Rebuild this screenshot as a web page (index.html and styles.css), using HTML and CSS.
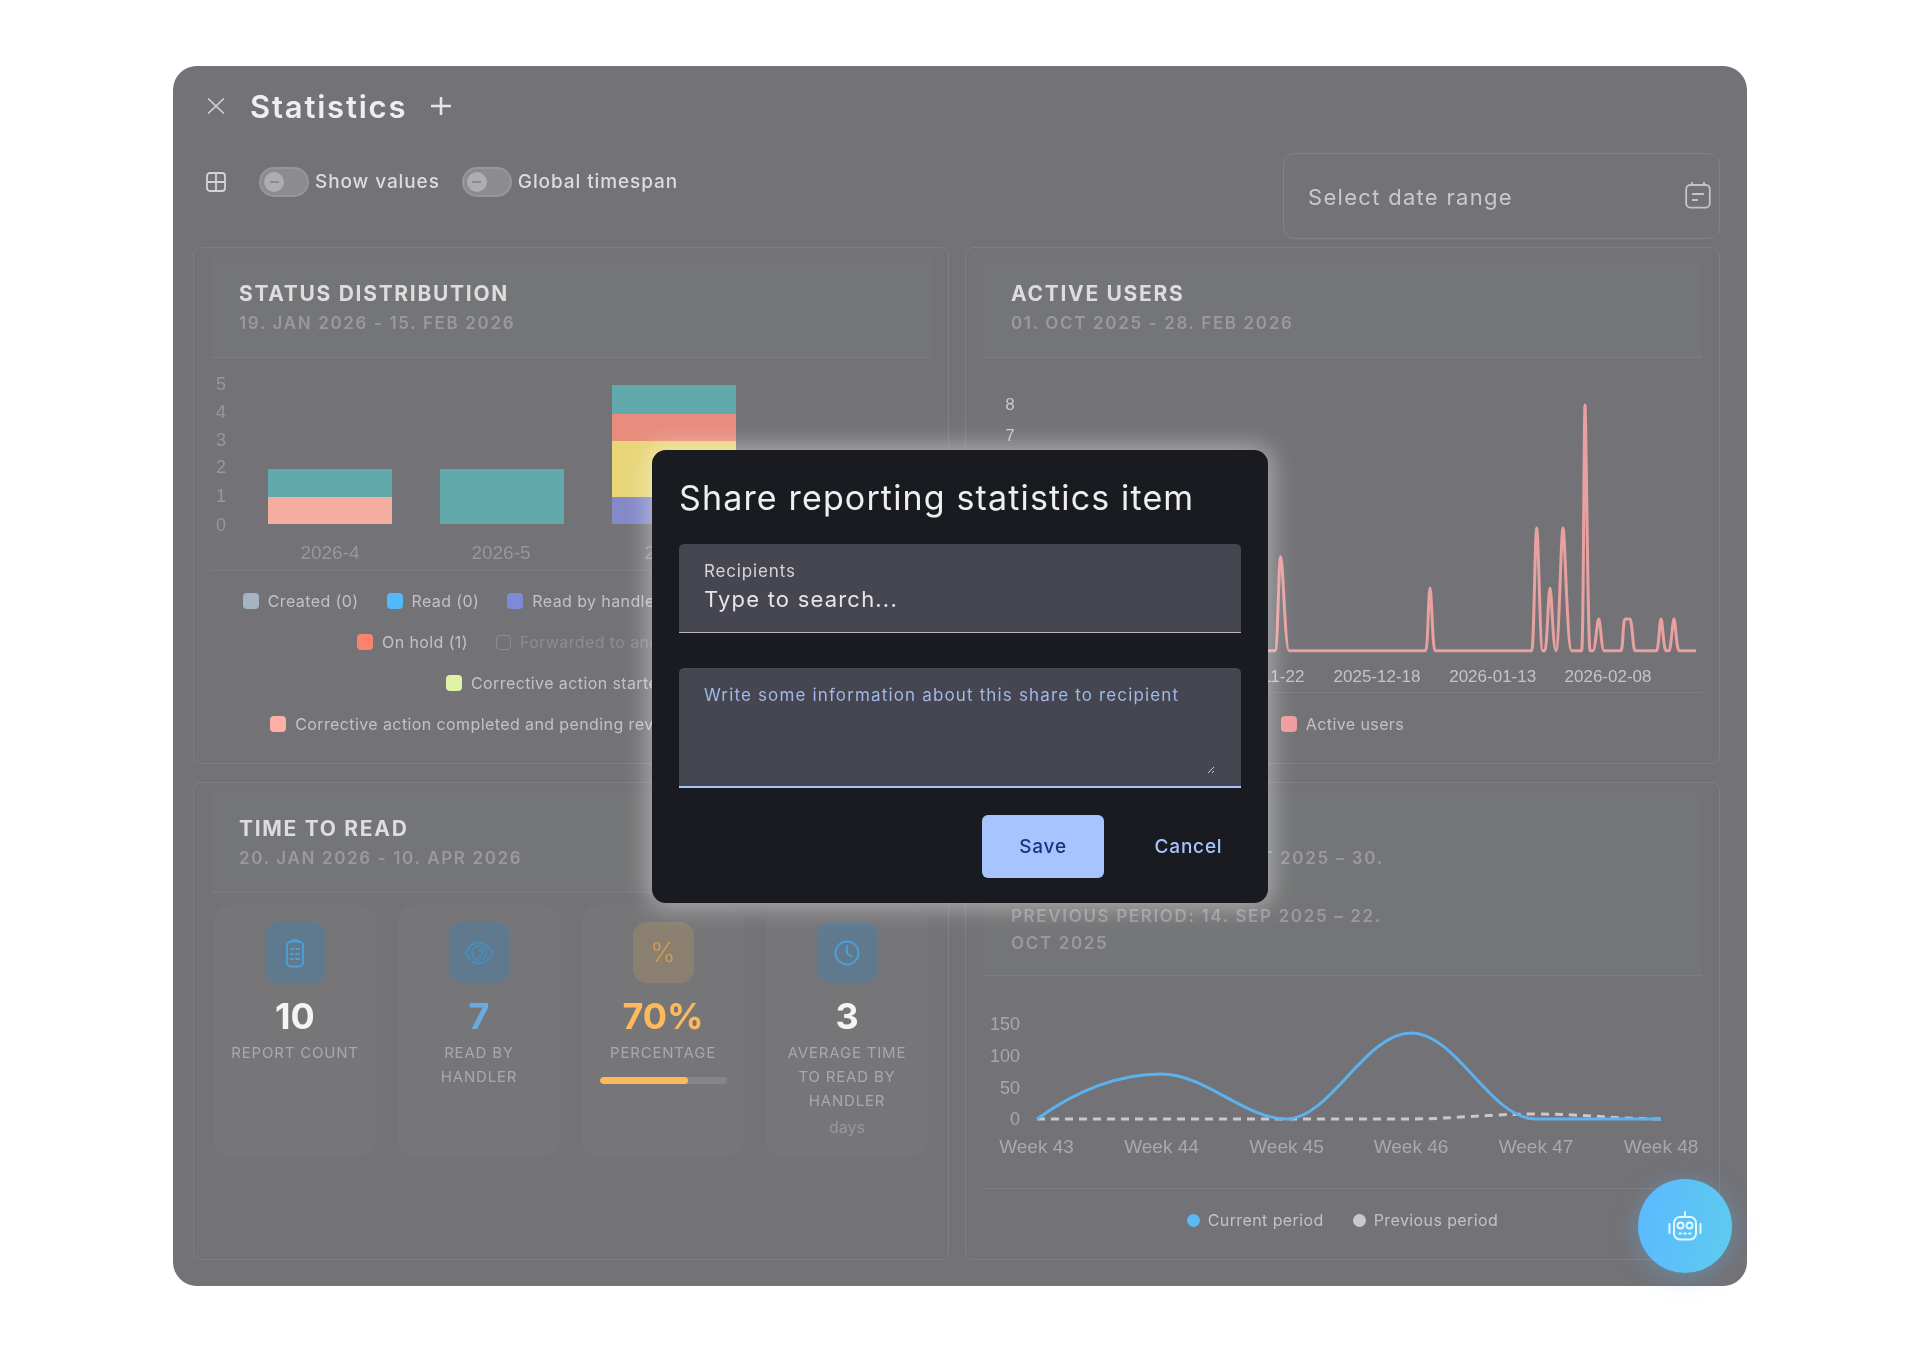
FILE: index.html
```html
<!DOCTYPE html>
<html lang="en">
<head>
<meta charset="utf-8">
<title>Statistics</title>
<link rel="stylesheet" href="styles.css">
</head>
<body>
<main class="panel">
  <header class="panel-head">
    <svg class="icon-close" viewBox="0 0 18 16" width="18" height="16"><path d="M1 0.5 17 15.5M17 0.5 1 15.5"/></svg>
    <h1 class="panel-title">Statistics</h1>
    <svg class="icon-plus" viewBox="0 0 20 18" width="20" height="18"><path d="M10 0v18M0 9h20"/></svg>
  </header>

  <div class="toolbar">
    <div class="toolbar-left">
      <svg class="icon-grid" viewBox="0 0 20 20" width="20" height="20"><rect x="1" y="1" width="18" height="18" rx="3"/><path d="M10 1v18M1 10h18"/></svg>
      <span class="toggle"><span class="knob"></span></span>
      <span class="toggle-text">Show values</span>
      <span class="toggle toggle-second"><span class="knob"></span></span>
      <span class="toggle-text">Global timespan</span>
    </div>
    <div class="date-field">
      <span class="date-text">Select date range</span>
      <svg class="icon-cal" viewBox="0 0 26 28" width="26" height="28"><rect x="1.2" y="4" width="23.6" height="22.6" rx="4"/><path d="M7 4V1M19 4V1M7 13h12M7 19h6"/></svg>
    </div>
  </div>

  <div class="cards">
    <section class="card">
      <div class="card-head">
        <h2 class="card-title">STATUS DISTRIBUTION</h2>
        <p class="card-sub">19. JAN 2026 - 15. FEB 2026</p>
      </div>
      <svg class="chart chart-status" viewBox="194 358 754 212">
        <g class="tick">
          <text x="221" y="390">5</text><text x="221" y="418">4</text><text x="221" y="446">3</text>
          <text x="221" y="473">2</text><text x="221" y="502">1</text><text x="221" y="531">0</text>
        </g>
        <rect class="s-teal" x="268" y="469" width="124" height="28"/>
        <rect class="s-peach" x="268" y="497" width="124" height="27"/>
        <rect class="s-teal" x="440" y="469" width="124" height="55"/>
        <rect class="s-teal" x="612" y="385" width="124" height="29"/>
        <rect class="s-salmon" x="612" y="414" width="124" height="27"/>
        <rect class="s-yellow" x="612" y="441" width="124" height="56"/>
        <rect class="s-violet" x="612" y="497" width="124" height="27"/>
        <g class="xlabel">
          <text x="330" y="559">2026-4</text><text x="501" y="559">2026-5</text><text x="674" y="559">2026-6</text>
        </g>
      </svg>
      <div class="rule"></div>
      <div class="legend legend-status">
        <div class="legend-row">
          <span class="item"><i class="sw sw-created"></i>Created (0)</span>
          <span class="item"><i class="sw sw-read"></i>Read (0)</span>
          <span class="item"><i class="sw sw-handler"></i>Read by handler (1)</span>
          <span class="item"><i class="sw sw-progress"></i>Being processed (0)</span>
        </div>
        <div class="legend-row">
          <span class="item"><i class="sw sw-hold"></i>On hold (1)</span>
          <span class="item item-off"><i class="sw sw-off"></i>Forwarded to another division (0)</span>
        </div>
        <div class="legend-row">
          <span class="item"><i class="sw sw-started"></i>Corrective action started (2)</span>
        </div>
        <div class="legend-row">
          <span class="item"><i class="sw sw-done"></i>Corrective action completed and pending review by a safety manager (1)</span>
        </div>
      </div>
    </section>

    <section class="card">
      <div class="card-head">
        <h2 class="card-title">ACTIVE USERS</h2>
        <p class="card-sub">01. OCT 2025 - 28. FEB 2026</p>
      </div>
      <svg class="chart chart-active" viewBox="966 358 753 334">
        <g class="tick">
          <text x="1010" y="410">8</text><text x="1010" y="441">7</text>
        </g>
        <path class="line-active" d="M1266 650.7H1275C1278 650.7 1278.5 556.7 1280.7 556.7C1283 556.7 1285 650.7 1289 650.7H1425.7C1428 650.7 1428.4 588 1430 588C1431.6 588 1432.5 650.7 1435 650.7H1531.7C1534 650.7 1535 528 1536.7 528C1538.4 528 1540 650.7 1542.7 650.7H1545C1547 650.7 1548.4 588 1550 588C1551.6 588 1553 650.7 1556 650.7C1559 650.7 1561 528 1563 528C1565 528 1567 650.7 1571.7 650.7H1581.7C1583.4 650.7 1584 405 1585 405C1586 405 1588 650.7 1590 650.7H1593C1595.5 650.7 1597 619 1598.7 619C1600.4 619 1601.5 650.7 1604 650.7H1621C1623 650.7 1623 619 1625 619H1630C1632 619 1633 650.7 1635 650.7H1656.7C1658.6 650.7 1659.6 619 1661 619C1662.4 619 1663.6 650.7 1666 650.7H1669C1671 650.7 1672.6 619 1674 619C1675.4 619 1676.6 650.7 1679 650.7H1696"/>
        <g class="xlabel">
          <text x="1261.5" y="682">2025-11-22</text><text x="1377" y="682">2025-12-18</text>
          <text x="1492.7" y="682">2026-01-13</text><text x="1608" y="682">2026-02-08</text>
        </g>
      </svg>
      <div class="rule"></div>
      <div class="legend legend-active">
        <div class="legend-row">
          <span class="item"><i class="sw sw-active"></i>Active users</span>
        </div>
      </div>
    </section>

    <section class="card">
      <div class="card-head">
        <h2 class="card-title">TIME TO READ</h2>
        <p class="card-sub">20. JAN 2026 - 10. APR 2026</p>
      </div>
      <div class="tiles">
        <article class="tile">
          <div class="tile-icon">
            <svg class="ico-blue" viewBox="0 0 24 30" width="24" height="30"><rect x="4" y="3.5" width="16" height="25" rx="4"/><path d="M8.5 3.5C8.5 1.5 15.5 1.5 15.5 3.5M8 11h2M13 11h3M8 16h2M13 16h3M8 21h2M13 21h3"/></svg>
          </div>
          <div class="tile-num">10</div>
          <div class="tile-label">REPORT COUNT</div>
        </article>
        <article class="tile">
          <div class="tile-icon">
            <svg class="ico-blue ico-eye" viewBox="0 0 30 26" width="30" height="26"><path d="M1.5 13C6 5 10 2.5 15 2.5S24 5 28.500 13C24 21 20 23.500 15 23.500S6 21 1.500 13Z"/><circle cx="15" cy="13" r="7"/><path d="M15 9.500A3.500 3.500 0 0 1 15 16.500"/></svg>
          </div>
          <div class="tile-num num-blue">7</div>
          <div class="tile-label">READ BY HANDLER</div>
        </article>
        <article class="tile">
          <div class="tile-icon icon-orange"><span class="pct">%</span></div>
          <div class="tile-num num-orange">70%</div>
          <div class="tile-label">PERCENTAGE</div>
          <div class="progress"><div class="progress-fill" style="width:70%"></div></div>
        </article>
        <article class="tile">
          <div class="tile-icon">
            <svg class="ico-blue" viewBox="0 0 26 26" width="26" height="26"><circle cx="13" cy="13" r="11.500"/><path d="M13 6v7.500l4.500 3"/></svg>
          </div>
          <div class="tile-num">3</div>
          <div class="tile-label">AVERAGE TIME TO READ BY HANDLER</div>
          <div class="tile-unit">days</div>
        </article>
      </div>
    </section>

    <section class="card">
      <div class="card-head card-head-tall">
        <h2 class="card-title">REPORTS OVER TIME</h2>
        <p class="card-sub card-sub-narrow">CURRENT PERIOD: 23. OCT 2025 – 30. NOV 2025</p>
        <p class="card-sub card-sub-narrow card-sub-next">PREVIOUS PERIOD: 14. SEP 2025 – 22. OCT 2025</p>
      </div>
      <svg class="chart chart-trend" viewBox="966 976 753 212">
        <g class="tick tick-end">
          <text x="1020" y="1030">150</text><text x="1020" y="1062">100</text><text x="1020" y="1094">50</text><text x="1020" y="1125">0</text>
        </g>
        <path class="line-prev" d="M1037 1119H1411C1450 1119 1490 1114 1536 1114C1580 1114 1620 1119 1661 1119"/>
        <path class="line-curr" d="M1037 1119C1080 1088 1120 1074 1161.500 1074C1205 1074 1245 1119 1286.600 1119C1330 1119 1365 1033 1411 1033C1457 1033 1490 1119 1536 1119H1661"/>
        <g class="xlabel">
          <text x="1036.500" y="1153">Week 43</text><text x="1161.500" y="1153">Week 44</text><text x="1286.600" y="1153">Week 45</text>
          <text x="1411" y="1153">Week 46</text><text x="1536" y="1153">Week 47</text><text x="1661" y="1153">Week 48</text>
        </g>
      </svg>
      <div class="rule"></div>
      <div class="legend legend-trend">
        <div class="legend-row legend-row-dots">
          <span class="item"><i class="dot dot-curr"></i>Current period</span>
          <span class="item"><i class="dot dot-prev"></i>Previous period</span>
        </div>
      </div>
    </section>
  </div>
</main>

<button class="fab" type="button" aria-label="Assistant">
  <svg class="icon-robot" viewBox="0 0 34 30" width="34" height="30"><rect x="6" y="6" width="22" height="22.500" rx="6"/><path d="M17 6V1M1.500 13v9M32.500 13v9"/><circle cx="12.500" cy="14.500" r="3"/><circle cx="21.500" cy="14.500" r="3"/><path d="M11.500 22.500h1.500M16.200 22.500h1.500M21 22.500h1.500"/></svg>
</button>

<div class="overlay">
  <div class="modal" role="dialog">
    <h2 class="modal-title">Share reporting statistics item</h2>
    <div class="field field-recipients">
      <div class="field-label">Recipients</div>
      <div class="field-value">Type to search...</div>
    </div>
    <div class="field field-note">
      <div class="field-hint">Write some information about this share to recipient</div>
      <svg class="resize" viewBox="0 0 8 8" width="8" height="8"><path d="M1 7 7 1M5 7 7 5"/></svg>
    </div>
    <div class="actions">
      <button class="btn btn-save" type="button">Save</button>
      <button class="btn btn-cancel" type="button">Cancel</button>
    </div>
  </div>
</div>
</body>
</html>
```
FILE: styles.css
```css
* { box-sizing: border-box; }
html, body { margin: 0; padding: 0; }
body {
  background: #fff;
  height: 1353px;
  overflow: hidden;
  font-family: "Inter", "Noto Sans", sans-serif;
  padding: 66px 173px 67px;
}
h1, h2, p { margin: 0; }

.panel {
  height: 1220px;
  background: #737276;
  border-radius: 24px;
  padding: 0 27px 0 20px;
  filter: blur(0.55px);
}
.panel-head {
  height: 80px;
  display: flex;
  align-items: center;
  padding-left: 14px;
}
.icon-close path { stroke: #d2d2d4; stroke-width: 1.6; fill: none; }
.panel-title {
  font-size: 31px;
  font-weight: 600;
  color: #eeeeef;
  margin-left: 25px;
  letter-spacing: 1.8px;
}
.icon-plus { margin-left: 24px; }
.icon-plus path { stroke: #e6e6e8; stroke-width: 2.6; fill: none; }

.toolbar {
  height: 86px;
  margin-top: 7px;
  display: flex;
  justify-content: space-between;
}
.toolbar-left {
  display: flex;
  align-items: center;
  height: 30px;
  margin-top: 14px;
  padding-left: 13px;
}
.icon-grid rect, .icon-grid path { stroke: #d4d4d6; stroke-width: 1.8; fill: none; }
.toggle {
  width: 50px;
  height: 30px;
  border-radius: 15px;
  background: #8b8b90;
  border: 2px solid #97979b;
  margin-left: 33px;
  display: flex;
  align-items: center;
  padding-left: 3px;
}
.toggle-second { margin-left: 22px; }
.knob {
  width: 20px;
  height: 20px;
  border-radius: 50%;
  background: #aeaeb2;
  display: flex;
  align-items: center;
  justify-content: center;
}
.knob::after { content: ""; width: 9px; height: 2px; background: #8b8b90; }
.toggle-text {
  color: #dcdcde;
  font-size: 19px;
  font-weight: 500;
  letter-spacing: 0.9px;
  margin-left: 6px;
  margin-top: -2px;
}
.date-field {
  width: 437px;
  height: 86px;
  border: 1.5px solid #828286;
  border-radius: 12px;
  display: flex;
  align-items: center;
  justify-content: space-between;
  padding: 0 8px 0 24px;
  color: #c9c9cc;
  font-size: 22px;
  letter-spacing: 1.3px;
}
.date-text { margin-top: 2px; }
.icon-cal { margin-bottom: 2px; }
.icon-cal rect, .icon-cal path { stroke: #c4c4c8; stroke-width: 1.8; fill: none; }

.cards {
  margin-top: 8px;
  display: grid;
  grid-template-columns: 756px 755px;
  grid-template-rows: 517px 478px;
  gap: 18px 16px;
}
.card {
  border: 1px solid #7f7f83;
  border-radius: 8px;
  overflow: hidden;
}
.card-head {
  margin: 10px 17px 0;
  padding: 22px 28px 20px;
  background: #747576;
  border-bottom: 1px solid #7d7d81;
}
.card-head-tall { padding-bottom: 18px; }
.card-title {
  font-size: 21px;
  line-height: 28px;
  font-weight: 700;
  color: #dddddf;
  letter-spacing: 1.7px;
}
.card-sub {
  margin-top: 2px;
  font-size: 17px;
  line-height: 27px;
  font-weight: 600;
  color: #9a9a9e;
  letter-spacing: 1.65px;
}
.card-sub-narrow { max-width: 400px; }
.card-sub-next { margin-top: 4px; }

.chart { display: block; width: 100%; }
.chart-status { height: 212px; }
.chart-active { height: 334px; }
.chart-trend { height: 212px; }
.chart text { font-family: "Liberation Sans", sans-serif; }
.tick text { font-size: 18px; fill: #98989c; text-anchor: middle; }
.chart-active .tick text { fill: #c8c8cb; font-size: 17px; }
.tick-end text { text-anchor: end; fill: #a9a9ac; }
.xlabel text { font-size: 19px; fill: #a9a9ac; text-anchor: middle; }
.chart-status .xlabel text { fill: #98989c; }
.chart-active .xlabel text { fill: #c4c4c7; font-size: 17px; }
.s-teal { fill: #62a9ac; }
.s-peach { fill: #f5ada0; }
.s-salmon { fill: #e88d7d; }
.s-yellow { fill: #e8d679; }
.s-violet { fill: #8489c7; }
.line-active { fill: none; stroke: #e8a0a0; stroke-width: 3; stroke-linejoin: round; }
.line-curr { fill: none; stroke: #5cb2ee; stroke-width: 3; stroke-linejoin: round; }
.line-prev { fill: none; stroke: #c9c9cb; stroke-width: 3; stroke-dasharray: 8 6; }

.rule { height: 1px; margin: 0 16px; background: #7d7d81; }

.legend { display: flex; flex-direction: column; align-items: center; gap: 21px; }
.legend-status { padding-top: 20px; }
.legend-active, .legend-trend { padding-top: 21px; }
.legend-row { display: flex; justify-content: center; gap: 28px; height: 20px; }
.legend-row-dots { gap: 29px; }
.item {
  display: flex;
  align-items: center;
  font-size: 16px;
  color: #c2c2c6;
  letter-spacing: 0.4px;
  white-space: nowrap;
}
.item-off { color: #8d8d91; }
.sw { width: 16px; height: 16px; border-radius: 4px; margin-right: 9px; flex: none; }
.sw-created { background: #a4b4c0; }
.sw-read { background: #4fb9fb; }
.sw-handler { background: #7d8bd6; }
.sw-progress { background: #62a9ac; }
.sw-hold { background: #fb826b; }
.sw-off { border: 1.5px solid #8d8d91; width: 15px; height: 15px; }
.sw-started { background: #dff3a8; }
.sw-done { background: #fdb0a6; }
.sw-active { background: #ee9c9c; }
.dot { width: 13px; height: 13px; border-radius: 50%; margin-right: 8px; flex: none; }
.dot-curr { background: #5cb8f5; }
.dot-prev { background: #c9c9cb; }

.tiles {
  margin-top: 12px;
  padding: 0 20px;
  display: grid;
  grid-template-columns: repeat(4, 1fr);
  gap: 22px;
}
.tile {
  height: 252px;
  background: #767679;
  border-radius: 16px;
  padding: 17px 14px 0;
  display: flex;
  flex-direction: column;
  align-items: center;
  text-align: center;
}
.tile-icon {
  width: 61px;
  height: 61px;
  border-radius: 14px;
  background: #5f7a8f;
  display: flex;
  align-items: center;
  justify-content: center;
}
.icon-orange { background: #8b8070; }
.pct { font-size: 27px; font-weight: 300; color: #cf9d56; }
.ico-blue * { fill: none; stroke: #4f9fd6; stroke-width: 1.8; stroke-linecap: round; }
.ico-eye * { stroke: #4a8cb9; }
.tile-num {
  margin-top: 13px;
  font-size: 36px;
  line-height: 40px;
  font-weight: 700;
  color: #f4f4f5;
}
.num-blue { color: #67abe0; }
.num-orange { color: #fdb95c; }
.tile-label {
  margin-top: 5px;
  font-size: 15px;
  line-height: 24px;
  color: #a9a9ad;
  letter-spacing: 0.8px;
}
.tile-unit {
  margin-top: 2px;
  font-size: 16px;
  line-height: 24px;
  color: #98989c;
}
.progress {
  width: 127px;
  height: 7px;
  margin-top: 12px;
  border-radius: 4px;
  background: #84848a;
  overflow: hidden;
  flex: none;
}
.progress-fill { height: 100%; background: #fdb95c; border-radius: 4px; }

.fab {
  position: absolute;
  right: 188px;
  bottom: 80px;
  width: 94px;
  height: 94px;
  border: 0;
  border-radius: 50%;
  background: linear-gradient(100deg, #5bb9ff, #5ecbee);
  box-shadow: 0 4px 24px rgba(91, 185, 255, 0.35);
  display: flex;
  align-items: center;
  justify-content: center;
  padding: 0;
}
.icon-robot * { fill: none; stroke: #e6f6ff; stroke-width: 2; stroke-linecap: round; }

.overlay {
  position: fixed;
  inset: 0;
  display: flex;
  align-items: center;
  justify-content: center;
}
.modal {
  width: 616px;
  height: 453px;
  background: #191b20;
  border-radius: 14px;
  padding: 27px;
  box-shadow: 0 0 24px 4px rgba(255, 255, 255, 0.42);
}
.modal-title {
  font-size: 34px;
  line-height: 42px;
  font-weight: 400;
  letter-spacing: 1.15px;
  color: #eeeff1;
  margin-bottom: 25px;
}
.field {
  background: #45464f;
  border-radius: 5px 5px 0 0;
  position: relative;
}
.field-recipients {
  height: 89px;
  padding: 15px 25px 0;
  border-bottom: 1.5px solid #b9b9bd;
}
.field-label { font-size: 17px; line-height: 24px; color: #d5d5d8; letter-spacing: 0.85px; }
.field-value { font-size: 22px; line-height: 30px; color: #e5e5e8; margin-top: 1px; letter-spacing: 1.2px; }
.field-note {
  height: 120px;
  margin-top: 35px;
  padding: 15px 25px 0;
  border-bottom: 2px solid #a8c4ff;
}
.field-hint { font-size: 17px; line-height: 24px; color: #a1b8ea; letter-spacing: 1.15px; }
.resize { position: absolute; right: 26px; bottom: 12px; }
.resize path { stroke: #c9c9cc; stroke-width: 1; fill: none; }
.actions {
  margin-top: 27px;
  margin-right: -19px;
  display: flex;
  justify-content: flex-end;
  gap: 13px;
}
.btn {
  height: 63px;
  border: 0;
  border-radius: 6px;
  font-family: "Inter", "Noto Sans", sans-serif;
  font-size: 19px;
  font-weight: 500;
  letter-spacing: 0.8px;
  padding: 0 30px;
}
.btn-save { width: 122px; background: #a8c4ff; color: #17357c; }
.btn-cancel { width: 143px; background: transparent; color: #a8c4ff; }
```
